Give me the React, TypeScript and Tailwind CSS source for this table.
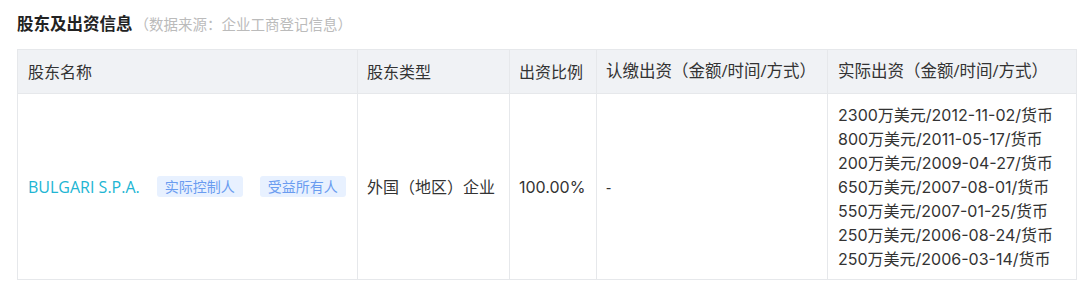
import React from "react";

const payments = [
  "2300万美元/2012-11-02/货币",
  "800万美元/2011-05-17/货币",
  "200万美元/2009-04-27/货币",
  "650万美元/2007-08-01/货币",
  "550万美元/2007-01-25/货币",
  "250万美元/2006-08-24/货币",
  "250万美元/2006-03-14/货币",
];

export default function App() {
  const font = { fontFamily: '"Open Sans", "Noto Sans CJK SC", sans-serif' };
  const inter = { fontFamily: 'Inter, "Noto Sans CJK SC", sans-serif' };
  return (
    <div className="w-[1080px] h-[290px] bg-white pl-[17px] pt-[12px]" style={font}>
      <div className="flex items-baseline h-[26px]">
        <span className="text-[16.5px] font-bold text-[#222]">股东及出资信息</span>
        <span className="ml-[2px] text-[14.5px] text-[#bbb]">（数据来源：企业工商登记信息）</span>
      </div>
      <table className="mt-[11px] w-[1059px] table-fixed border-collapse text-[16px] text-[#333]">
        <colgroup>
          <col className="w-[340px]" />
          <col className="w-[152px]" />
          <col className="w-[87px]" />
          <col className="w-[231px]" />
          <col className="w-[249px]" />
        </colgroup>
        <thead>
          <tr className="bg-[#f0f2f5] h-[44px]">
            <th className="border border-[#e6e8eb] text-left font-normal pl-[10px]">股东名称</th>
            <th className="border border-[#e6e8eb] text-left font-normal pl-[9px]">股东类型</th>
            <th className="border border-[#e6e8eb] text-left font-normal pl-[9px]">出资比例</th>
            <th className="border border-[#e6e8eb] text-left font-normal pl-[9px] whitespace-nowrap text-[16.5px]">认缴出资（金额/时间/方式）</th>
            <th className="border border-[#e6e8eb] text-left font-normal pl-[10px] whitespace-nowrap text-[16.5px]">实际出资（金额/时间/方式）</th>
          </tr>
        </thead>
        <tbody>
          <tr className="h-[186px]">
            <td className="border border-[#e6e8eb] pl-[10px]">
              <div className="flex items-center">
                <span className="text-[#21b5d3]">BULGARI S.P.A.</span>
                <span className="ml-[17px] h-[21px] px-[8px] flex items-center rounded-[3px] bg-[#e8f1ff] text-[#6a9cf0] text-[14px]">实际控制人</span>
                <span className="ml-[17px] h-[21px] px-[8px] flex items-center rounded-[3px] bg-[#e8f1ff] text-[#6a9cf0] text-[14px]">受益所有人</span>
              </div>
            </td>
            <td className="border border-[#e6e8eb] pl-[9px] whitespace-nowrap">外国（地区）企业</td>
            <td className="border border-[#e6e8eb] pl-[9px]" style={inter}>100.00%</td>
            <td className="border border-[#e6e8eb] pl-[9px]">-</td>
            <td className="border border-[#e6e8eb] pl-[10px] py-[8px]" style={inter}>
              <div className="flex flex-col leading-[24px] whitespace-nowrap">
                {payments.map((p) => (
                  <span key={p}>{p}</span>
                ))}
              </div>
            </td>
          </tr>
        </tbody>
      </table>
    </div>
  );
}
